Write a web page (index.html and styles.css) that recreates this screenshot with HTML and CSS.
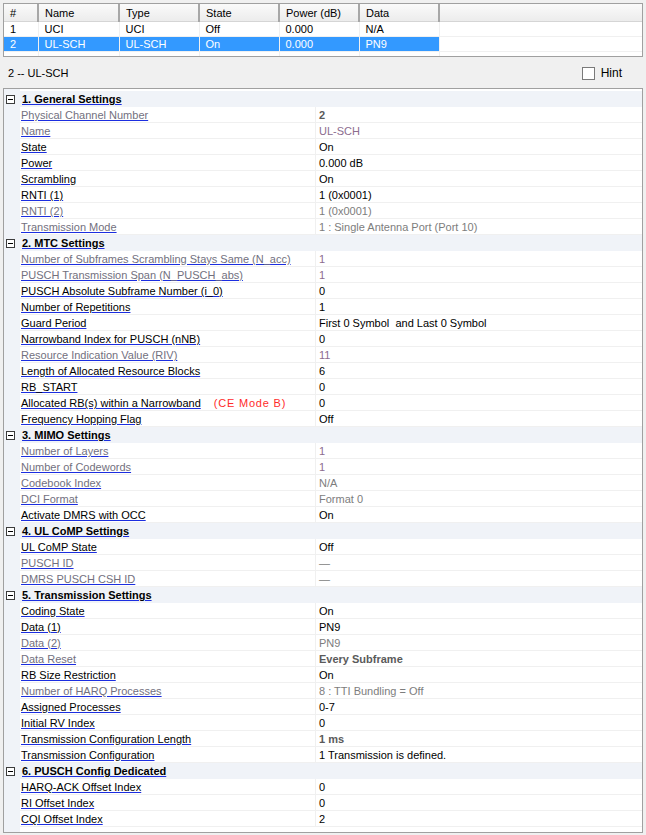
FILE: index.html
```html
<!DOCTYPE html>
<html lang="en">
<head>
    <meta charset="UTF-8">
    <title>UL-SCH settings</title>
    <link rel="stylesheet" href="styles.css">
</head>
<body>
    <div class="list">
        <table class="list-table">
            <colgroup>
                <col style="width:34px"><col style="width:81px"><col style="width:80px"><col style="width:80px"><col style="width:80px"><col style="width:80px"><col>
            </colgroup>
            <thead>
                <tr><th>#</th><th>Name</th><th>Type</th><th>State</th><th>Power (dB)</th><th>Data</th><th class="rest"></th></tr>
            </thead>
            <tbody>
                <tr><td>1</td><td>UCI</td><td>UCI</td><td>Off</td><td>0.000</td><td>N/A</td><td></td></tr>
                <tr class="selected"><td>2</td><td>UL-SCH</td><td>UL-SCH</td><td>On</td><td>0.000</td><td>PN9</td><td class="rest"></td></tr>
                <tr class="empty"><td></td><td></td><td></td><td></td><td></td><td></td><td></td></tr>
            </tbody>
        </table>
    </div>

    <div class="info-bar">
        <span>2 -- UL-SCH</span>
        <label class="hint"><span class="checkbox"></span>Hint</label>
    </div>

    <div class="grid">
        <div class="cat"><span class="minus"></span><span class="cat-title">1. General Settings</span></div>
        <div class="row"><span></span><span class="lbl off">Physical Channel Number</span><span class="val bold">2</span></div>
        <div class="row"><span></span><span class="lbl off">Name</span><span class="val purple">UL-SCH</span></div>
        <div class="row"><span></span><span class="lbl">State</span><span class="val">On</span></div>
        <div class="row"><span></span><span class="lbl">Power</span><span class="val">0.000 dB</span></div>
        <div class="row"><span></span><span class="lbl">Scrambling</span><span class="val">On</span></div>
        <div class="row"><span></span><span class="lbl">RNTI (1)</span><span class="val">1 (0x0001)</span></div>
        <div class="row"><span></span><span class="lbl off">RNTI (2)</span><span class="val gray">1 (0x0001)</span></div>
        <div class="row"><span></span><span class="lbl off">Transmission Mode</span><span class="val gray">1 : Single Antenna Port (Port 10)</span></div>

        <div class="cat"><span class="minus"></span><span class="cat-title">2. MTC Settings</span></div>
        <div class="row"><span></span><span class="lbl off">Number of Subframes Scrambling Stays Same (N_acc)</span><span class="val purple">1</span></div>
        <div class="row"><span></span><span class="lbl off">PUSCH Transmission Span (N_PUSCH_abs)</span><span class="val purple">1</span></div>
        <div class="row"><span></span><span class="lbl">PUSCH Absolute Subframe Number (i_0)</span><span class="val">0</span></div>
        <div class="row"><span></span><span class="lbl">Number of Repetitions</span><span class="val">1</span></div>
        <div class="row"><span></span><span class="lbl">Guard Period</span><span class="val">First 0 Symbol &nbsp;and Last 0 Symbol</span></div>
        <div class="row"><span></span><span class="lbl">Narrowband Index for PUSCH (nNB)</span><span class="val">0</span></div>
        <div class="row"><span></span><span class="lbl off">Resource Indication Value (RIV)</span><span class="val purple">11</span></div>
        <div class="row"><span></span><span class="lbl">Length of Allocated Resource Blocks</span><span class="val">6</span></div>
        <div class="row"><span></span><span class="lbl">RB_START</span><span class="val">0</span></div>
        <div class="row"><span></span><span class="lbl-wrap"><span class="lbl">Allocated RB(s) within a Narrowband</span><span class="note">(CE Mode B)</span></span><span class="val">0</span></div>
        <div class="row"><span></span><span class="lbl">Frequency Hopping Flag</span><span class="val">Off</span></div>

        <div class="cat"><span class="minus"></span><span class="cat-title">3. MIMO Settings</span></div>
        <div class="row"><span></span><span class="lbl off">Number of Layers</span><span class="val purple">1</span></div>
        <div class="row"><span></span><span class="lbl off">Number of Codewords</span><span class="val purple">1</span></div>
        <div class="row"><span></span><span class="lbl off">Codebook Index</span><span class="val gray">N/A</span></div>
        <div class="row"><span></span><span class="lbl off">DCI Format</span><span class="val gray">Format 0</span></div>
        <div class="row"><span></span><span class="lbl">Activate DMRS with OCC</span><span class="val">On</span></div>

        <div class="cat"><span class="minus"></span><span class="cat-title">4. UL CoMP Settings</span></div>
        <div class="row"><span></span><span class="lbl">UL CoMP State</span><span class="val">Off</span></div>
        <div class="row"><span></span><span class="lbl off">PUSCH ID</span><span class="val gray">&mdash;</span></div>
        <div class="row"><span></span><span class="lbl off">DMRS PUSCH CSH ID</span><span class="val gray">&mdash;</span></div>

        <div class="cat"><span class="minus"></span><span class="cat-title">5. Transmission Settings</span></div>
        <div class="row"><span></span><span class="lbl">Coding State</span><span class="val">On</span></div>
        <div class="row"><span></span><span class="lbl">Data (1)</span><span class="val">PN9</span></div>
        <div class="row"><span></span><span class="lbl off">Data (2)</span><span class="val gray">PN9</span></div>
        <div class="row"><span></span><span class="lbl off">Data Reset</span><span class="val bold">Every Subframe</span></div>
        <div class="row"><span></span><span class="lbl">RB Size Restriction</span><span class="val">On</span></div>
        <div class="row"><span></span><span class="lbl off">Number of HARQ Processes</span><span class="val gray">8 : TTI Bundling = Off</span></div>
        <div class="row"><span></span><span class="lbl">Assigned Processes</span><span class="val">0-7</span></div>
        <div class="row"><span></span><span class="lbl">Initial RV Index</span><span class="val">0</span></div>
        <div class="row"><span></span><span class="lbl">Transmission Configuration Length</span><span class="val bold">1 ms</span></div>
        <div class="row"><span></span><span class="lbl">Transmission Configuration</span><span class="val">1 Transmission is defined.</span></div>

        <div class="cat"><span class="minus"></span><span class="cat-title">6. PUSCH Config Dedicated</span></div>
        <div class="row"><span></span><span class="lbl">HARQ-ACK Offset Index</span><span class="val">0</span></div>
        <div class="row"><span></span><span class="lbl">RI Offset Index</span><span class="val">0</span></div>
        <div class="row"><span></span><span class="lbl">CQI Offset Index</span><span class="val">2</span></div>
    </div>
</body>
</html>
```

FILE: styles.css
```css
body {
    margin: 0;
    width: 646px;
    height: 835px;
    overflow: hidden;
    background-color: #f0f0f0;
    font-family: "Liberation Sans", Arial, sans-serif;
    font-size: 11px;
    color: #000;
}

/* channel list */
.list {
    margin: 3px 0 0 3px;
    width: 640px;
    height: 54px;
    box-sizing: border-box;
    border: 1px solid #a0a0a0;
    background-color: #fff;
    overflow: hidden;
}

.list-table {
    width: 100%;
    table-layout: fixed;
    border-collapse: collapse;
}

.list-table th {
    height: 17px;
    padding: 0 0 0 6px;
    text-align: left;
    font-weight: normal;
    background: linear-gradient(#fafafa, #ececec);
    border-right: 2px solid #a7a7a7;
    border-bottom: 1px solid #d5d5d5;
    white-space: nowrap;
}

.list-table th.rest {
    border-right: none;
}

.list-table td {
    height: 14px;
    padding: 0 0 0 6px;
    line-height: 14px;
    border-right: 1px solid #f0f0f0;
    border-bottom: 1px solid #f0f0f0;
    white-space: nowrap;
}

.list-table td:last-child {
    border-right: none;
}

.list-table tr.selected td {
    background-color: #3399ff;
    color: #fff;
}

.list-table tr.selected td.rest {
    background-color: #fff;
}

/* info bar */
.info-bar {
    height: 31px;
    display: flex;
    align-items: center;
    justify-content: space-between;
    padding: 1px 0 0 8px;
    box-sizing: border-box;
    font-size: 11px;
}

.hint {
    display: flex;
    align-items: center;
    margin-right: 24px;
    gap: 6px;
    font-size: 12px;
}

.checkbox {
    width: 11px;
    height: 11px;
    border: 1px solid #7a7a7a;
    background-color: #fff;
}

/* property grid */
.grid {
    margin-left: 3px;
    width: 640px;
    height: 745px;
    box-sizing: border-box;
    padding-top: 2px;
    border: 1px solid #a0a0a0;
    background: linear-gradient(to right, #f0f3f8 16px, #fff 16px);
}

.cat {
    display: flex;
    align-items: center;
    height: 16px;
    background-color: #f0f3f8;
}

.minus {
    position: relative;
    width: 7px;
    height: 7px;
    margin: 0 7px 0 2px;
    border: 1px solid #3c3c3c;
    background-color: #fff;
}

.minus::after {
    content: "";
    position: absolute;
    left: 1px;
    top: 3px;
    width: 5px;
    height: 1px;
    background-color: #000;
}

.cat-title {
    font-weight: bold;
    line-height: 15px;
    padding-top: 1px;
    text-decoration: underline;
    text-decoration-color: #1c2ee0;
    text-underline-offset: 1px;
}

.row {
    display: grid;
    grid-template-columns: 16px 296px 1fr;
    height: 16px;
}

.lbl,
.lbl-wrap {
    padding-left: 1px;
    line-height: 15px;
    white-space: nowrap;
    overflow: hidden;
}

.row > .lbl,
.row > .lbl-wrap,
.val {
    height: 16px;
    box-sizing: border-box;
    padding-top: 1px;
    border-bottom: 1px solid #f0f0f0;
}

.row > .lbl,
.row > .lbl-wrap {
    border-right: 1px solid #f0f0f0;
}

.lbl {
    text-decoration: underline;
    text-decoration-color: #1c2ee0;
    text-underline-offset: 1px;
}

.lbl-wrap .lbl {
    padding-left: 0;
}

.lbl.off {
    color: #72707e;
}

.note {
    margin-left: 13px;
    color: #ff2a2a;
    letter-spacing: 0.8px;
}

.val {
    padding-left: 3px;
    line-height: 14px;
    white-space: nowrap;
    overflow: hidden;
}

.val.gray {
    color: #7d7d7d;
}

.val.purple {
    color: #8c6c8e;
}

.val.bold {
    font-weight: bold;
    color: #5a5a5a;
}
```
